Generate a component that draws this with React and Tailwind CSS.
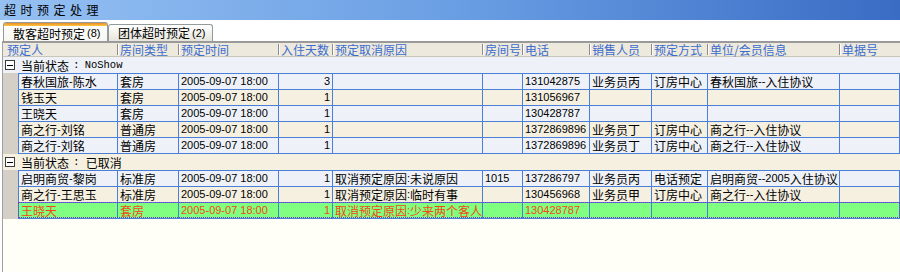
import React from "react";

const LINE = "border-[#4a7fd8]";

function T({ s }) {
  const parts = s.match(/[\x00-\x7f]+|[^\x00-\x7f]+/g) || [];
  return parts.map((p, i) =>
    /^[\x00-\x7f]+$/.test(p) ? (
      <span key={i} className="font-['Liberation_Sans',sans-serif] text-[11px]">
        {p}
      </span>
    ) : (
      <span key={i} className="font-['Noto_Sans_CJK_SC',sans-serif] text-[12px]">
        {p}
      </span>
    )
  );
}

const headers = [
  "预定人",
  "房间类型",
  "预定时间",
  "入住天数",
  "预定取消原因",
  "房间号",
  "电话",
  "销售人员",
  "预定方式",
  "单位/会员信息",
  "单据号",
];

const groups = [
  {
    label: "NoShow",
    mono: true,
    bg: "bg-[#eef2f8]",
    rows: [
      ["春秋国旅-陈水", "套房", "2005-09-07 18:00", "3", "", "", "131042875", "业务员丙", "订房中心", "春秋国旅--入住协议", ""],
      ["钱玉天", "套房", "2005-09-07 18:00", "1", "", "", "131056967", "", "", "", ""],
      ["王晓天", "套房", "2005-09-07 18:00", "1", "", "", "130428787", "", "", "", ""],
      ["商之行-刘铭", "普通房", "2005-09-07 18:00", "1", "", "", "1372869896", "业务员丁", "订房中心", "商之行--入住协议", ""],
      ["商之行-刘铭", "普通房", "2005-09-07 18:00", "1", "", "", "1372869896", "业务员丁", "订房中心", "商之行--入住协议", ""],
    ],
  },
  {
    label: "已取消",
    mono: false,
    bg: "bg-[#f6f0e0]",
    rows: [
      ["启明商贸-黎岗", "标准房", "2005-09-07 18:00", "1", "取消预定原因:未说原因", "1015", "137286797", "业务员丙", "电话预定", "启明商贸--2005入住协议", ""],
      ["商之行-王思玉", "标准房", "2005-09-07 18:00", "1", "取消预定原因:临时有事", "", "130456968", "业务员甲", "订房中心", "商之行--入住协议", ""],
      ["王晓天", "套房", "2005-09-07 18:00", "1", "取消预定原因:少来两个客人", "", "130428787", "", "", "", ""],
    ],
  },
];

function Row({ cells, idx, selected }) {
  const bg = selected
    ? "bg-[#80ff80] text-[#f24a14] outline-1 outline-dotted outline-[#7a3cc8] -outline-offset-1"
    : idx % 2 === 0
    ? "bg-[#eef2f8] text-black"
    : "bg-[#f6f0e0] text-black";
  return (
    <div className="flex h-[16px]">
      <div className="w-[15px] shrink-0 bg-[#d4d0c8]" />
      <div
        className={`grid flex-1 grid-cols-[99px_61px_100px_54px_150px_40px_67px_62px_56px_132px_1fr] border-t border-l ${LINE} ${bg}`}
      >
        {cells.map((c, i) => (
          <div
            key={i}
            className={`flex items-center overflow-hidden whitespace-nowrap border-r ${LINE} leading-[15px] ${
              i === 3 ? "justify-end pr-[2px]" : "pl-[2px]"
            }`}
          >
            <T s={c} />
          </div>
        ))}
      </div>
    </div>
  );
}

function Group({ g }) {
  return (
    <div>
      <div className={`flex h-[16px] items-center ${g.bg}`}>
        <div className="ml-[2px] flex h-[10px] w-[10px] items-center justify-center border border-[#3c3c3c] bg-white">
          <div className="h-px w-[6px] bg-black" />
        </div>
        <div className="ml-[6px] flex items-center whitespace-nowrap leading-[15px] text-black">
          <span className="font-['Noto_Sans_CJK_SC',sans-serif] text-[12px]">当前状态</span>
          <span className="ml-[4px] font-['Liberation_Mono',monospace] text-[11px]">:</span>
          {g.mono ? (
            <span className="ml-[5px] font-['Liberation_Mono',monospace] text-[10.5px]">
              {g.label}
            </span>
          ) : (
            <span className="ml-[6px] font-['Noto_Sans_CJK_SC',sans-serif] text-[12px]">
              {g.label}
            </span>
          )}
        </div>
      </div>
      {g.rows.map((r, i) => (
        <Row key={i} cells={r} idx={i} selected={g.label === "已取消" && i === 2} />
      ))}
      <div className="flex">
        <div className="w-[15px] shrink-0 bg-[#d4d0c8]" />
        <div className="h-px flex-1 bg-[#4a7fd8]" />
      </div>
    </div>
  );
}

export default function App() {
  return (
    <div className="h-[272px] w-[900px] overflow-hidden bg-white">
      {/* title bar */}
      <div className="flex h-[20px] items-center bg-gradient-to-r from-[#95c0f2] via-[#6b9fe4] to-[#3a6cc4] pl-[4px]">
        <span className="font-['Noto_Sans_CJK_SC',sans-serif] text-[12px] leading-none tracking-[4.5px] text-black">
          超时预定处理
        </span>
      </div>
      {/* tabs */}
      <div className="flex h-[21px] items-end bg-white pl-[3px]">
        <div className="flex h-[19px] w-[105px] flex-col rounded-t-[3px] border-x border-t border-[#919b9c] bg-gradient-to-b from-white to-[#f7f6f1]">
          <div className="h-[3px] rounded-t-[2px] bg-gradient-to-b from-[#e68b2c] to-[#ffc83c]" />
          <div className="flex flex-1 items-center pl-[9px] leading-none text-black">
            <span className="font-['Noto_Sans_CJK_SC',sans-serif] text-[12px]">散客超时预定</span>
            <span className="ml-[2px] font-['Liberation_Sans',sans-serif] text-[11px]">(8)</span>
          </div>
        </div>
        <div className="flex h-[17px] w-[105px] items-center rounded-t-[3px] border-x border-t border-[#919b9c] bg-gradient-to-b from-white to-[#e6e4da] pl-[9px] leading-none text-black">
          <span className="font-['Noto_Sans_CJK_SC',sans-serif] text-[12px]">团体超时预定</span>
          <span className="ml-[2px] font-['Liberation_Sans',sans-serif] text-[11px]">(2)</span>
        </div>
      </div>
      {/* grid */}
      <div className="ml-[2px] h-[231px] border-l border-[#a0a0a0] bg-[#fffff7]">
        <div className="grid h-[16px] grid-cols-[114px_61px_100px_54px_150px_40px_67px_62px_56px_132px_1fr] border-t-2 border-b border-t-[#9a9a9a] border-b-[#c9c5b8] bg-[#ede9dc]">
          {headers.map((h, i) => (
            <div key={i} className="flex items-center whitespace-nowrap leading-none text-[#3b6ccf]">
              {i > 0 && <span className="h-[11px] w-[2px] border-l border-r border-l-[#8c8c8c] border-r-white" />}
              <span className={`font-['Noto_Sans_CJK_SC',sans-serif] text-[12px] ${i === 0 ? "pl-[4px]" : "pl-[1px]"}`}>
                {h}
              </span>
            </div>
          ))}
        </div>
        {groups.map((g, i) => (
          <Group key={i} g={g} />
        ))}
      </div>
    </div>
  );
}
